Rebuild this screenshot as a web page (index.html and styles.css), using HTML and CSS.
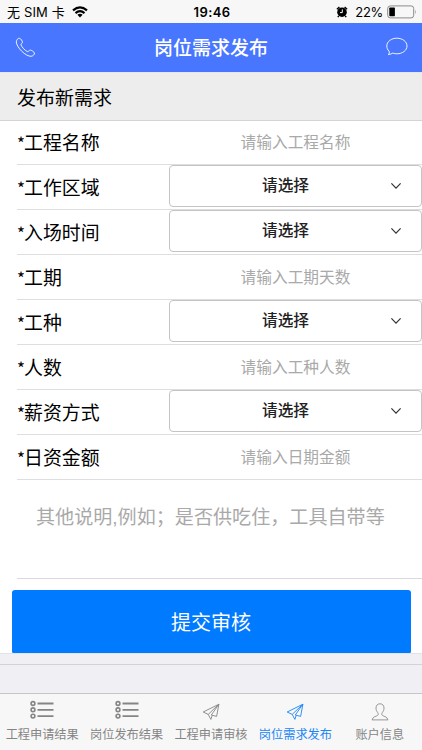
FILE: index.html
```
<!DOCTYPE html>
<html lang="zh-CN">
<head>
<meta charset="utf-8">
<title>岗位需求发布</title>
<link rel="stylesheet" href="styles.css">
</head>
<body>
<div class="status">
  <div class="carrier"><span>无 SIM 卡</span>
    <svg width="16" height="12" viewBox="0 0 16 12" fill="none" stroke="#000" stroke-width="2.1"><path d="M1 4.4Q8-1.8 15 4.4M3.5 7.1Q8 3.1 12.5 7.1"/><path d="M5.4 8.7Q8 6.700 10.600 8.700L8 11.500Z" fill="#000" stroke="none"/></svg>
  </div>
  <div class="time">19:46</div>
  <div class="power">
    <svg width="12" height="12" viewBox="0 0 12 12"><circle cx="6" cy="6.2" r="4.8"/><path d="M.9 3.2 3.4 1M11.1 3.2 8.6 1M2.8 9.8 1.8 11.2M9.2 9.8l1 1.4" stroke="#000" stroke-width="1.4"/><path d="M6.3 3.4v3.2H4" fill="none" stroke="#fff" stroke-width="1"/></svg>
    <span>22%</span>
    <svg width="30" height="14" viewBox="0 0 30 14"><rect x=".7" y=".9" width="26" height="12" rx="2.6" fill="none" stroke="#8a8a8a"/><rect x="2.3" y="2.5" width="5.6" height="8.8" rx=".7"/><path d="M28 4.7q1.5 2.2 0 4.4z" fill="#888"/></svg>
  </div>
</div>
<header class="header">
  <svg width="21" height="21" viewBox="0 0 21 21" fill="none" stroke="#fff" stroke-width=".9"><path d="M4.6 1.3C3 .9 1.4 3.1 1.3 4.9c-.1 2.3 2.3 6.2 5.4 9.3s7 5.3 9.4 5.1c1.8-.2 3.7-2 3.4-3.2-.2-1-3-3-4.2-3-1.1 0-1.7 1.7-2.8 1.5-1.9-.4-6.2-4.9-6.5-6.8C5.8 6.7 7.500 6.200 7.500 5.200 7.500 4 5.700 1.600 4.600 1.300Z"/></svg>
  <h1>岗位需求发布</h1>
  <svg width="22" height="20" viewBox="0 0 22 20" fill="none" stroke="#fff" stroke-width=".9"><path d="M2.300 17.500C3.600 16.700 3.500 15.300 3 14.100 1.500 12.700.8 10.900.8 9c0-4.500 4.500-7.800 10.100-7.800S21 4.600 21 9s-4.500 7.800-10.100 7.800c-1.500 0-2.900-.3-4.100-.7-1.300.8-2.800 1.400-4.500 1.400Z"/></svg>
</header>
<h2 class="section">发布新需求</h2>
<main class="form">
  <div class="row"><label><i>*</i>工程名称</label><div class="input">请输入工程名称</div></div>
  <div class="row"><label><i>*</i>工作区域</label><div class="select"><span>请选择</span><svg class="chev" viewBox="0 0 12 8"><path d="m1.400 1.300 4.600 4.900 4.600-4.900"/></svg></div></div>
  <div class="row"><label><i>*</i>入场时间</label><div class="select"><span>请选择</span><svg class="chev" viewBox="0 0 12 8"><path d="m1.400 1.300 4.600 4.900 4.600-4.900"/></svg></div></div>
  <div class="row"><label><i>*</i>工期</label><div class="input">请输入工期天数</div></div>
  <div class="row"><label><i>*</i>工种</label><div class="select"><span>请选择</span><svg class="chev" viewBox="0 0 12 8"><path d="m1.400 1.300 4.600 4.900 4.600-4.900"/></svg></div></div>
  <div class="row"><label><i>*</i>人数</label><div class="input">请输入工种人数</div></div>
  <div class="row"><label><i>*</i>薪资方式</label><div class="select"><span>请选择</span><svg class="chev" viewBox="0 0 12 8"><path d="m1.400 1.300 4.600 4.900 4.600-4.900"/></svg></div></div>
  <div class="row"><label><i>*</i>日资金额</label><div class="input">请输入日期金额</div></div>
  <div class="notes">其他说明,例如；是否供吃住，工具自带等</div>
  <button class="submit">提交审核</button>
</main>
<div class="gap"></div>
<nav class="tabs">
  <div class="tab"><svg width="24" height="20" viewBox="0 0 24 20" fill="none" stroke="#858585" stroke-width="1.600"><circle cx="3" cy="3.500" r="1.900"/><circle cx="3" cy="9.800" r="1.900"/><circle cx="3" cy="16.100" r="1.900"/><path d="M7.500 3.500H23.500M7.500 9.800H23.500M7.500 16.100H23.500" stroke-width="1.800"/></svg><span>工程申请结果</span></div>
  <div class="tab"><svg width="24" height="20" viewBox="0 0 24 20" fill="none" stroke="#858585" stroke-width="1.600"><circle cx="3" cy="3.500" r="1.900"/><circle cx="3" cy="9.800" r="1.900"/><circle cx="3" cy="16.100" r="1.900"/><path d="M7.500 3.500H23.500M7.500 9.800H23.500M7.500 16.100H23.500" stroke-width="1.800"/></svg><span>岗位发布结果</span></div>
  <div class="tab"><svg class="plane" width="18" height="20" viewBox="0 0 18 20"><path d="M16.900 4.200 1.200 12l5 2.400L16.900 4.200ZM6.200 14.400 8.900 19.400 10.200 15.300M16.900 4.200 9.300 15 14.600 16.400Z"/></svg><span>工程申请审核</span></div>
  <div class="tab active"><svg class="plane" width="18" height="20" viewBox="0 0 18 20"><path d="M16.900 4.200 1.200 12l5 2.400L16.900 4.200ZM6.200 14.400 8.900 19.400 10.200 15.300M16.900 4.200 9.300 15 14.600 16.400Z"/></svg><span>岗位需求发布</span></div>
  <div class="tab"><svg class="person" width="18" height="20" viewBox="0 0 18 20" fill="none" stroke="#8b8b8b" stroke-width=".9"><path d="M9 1.800C6.500 1.800 5 3.500 5 6c0 2.200.8 3.400 1.700 4.600.7 1 .8 2.200-.2 2.900-1.100.8-4.900 1.100-5.400 4.400h15.800c-.5-3.300-4.300-3.600-5.400-4.400-1-.7-.9-1.900-.2-2.900C12.200 9.400 13 8.200 13 6c0-2.500-1.500-4.200-4-4.200Z"/></svg><span>账户信息</span></div>
</nav>
</body>
</html>
```
FILE: styles.css
```
* { box-sizing: border-box; }
body {
  margin: 0;
  width: 422px;
  height: 750px;
  overflow: hidden;
  display: flex;
  flex-direction: column;
  background: #efeff4;
  color: #000;
  font-family: "Liberation Sans", "Noto Sans CJK SC", sans-serif;
}
svg { display: block; flex: none; }
h1, h2 { margin: 0; font-weight: 400; }
.status {
  height: 23px;
  flex: none;
  display: grid;
  grid-template-columns: 1fr auto 1fr;
  align-items: center;
  padding: 0 5px 0 7px;
  background: #f7f7f7;
  font: 13px/22px Inter, "Noto Sans CJK SC", sans-serif;
}
.carrier, .power { display: flex; align-items: center; }
.carrier { gap: 7px; letter-spacing: .15px; }
.power { justify-content: flex-end; gap: 4px; }
.power span { margin-left: 3px; letter-spacing: -.3px; }
.time { font-weight: 600; letter-spacing: .4px; }
.header {
  height: 49px;
  flex: none;
  display: flex;
  align-items: center;
  justify-content: space-between;
  padding: 0 14px 1px 15px;
  background: #4876ff;
  color: #fff;
}
.header h1 { font-size: 19px; font-weight: 500; line-height: 48px; padding-top: 3px; }
.section {
  height: 49px;
  flex: none;
  padding: 1px 0 0 17px;
  border-top: 1px solid #e6e6f0;
  border-bottom: 1px solid #d4d4d6;
  background: #ededed;
  font-size: 19px;
  line-height: 49px;
}
.form {
  height: 532px;
  flex: none;
  padding-left: 17px;
  background: #fff;
}
.row {
  height: 45px;
  display: flex;
  align-items: flex-start;
  border-bottom: 1px solid #dedee0;
}
.row:first-child { height: 44px; }
.row label { width: 152px; flex: none; font-size: 18.900px; line-height: 47px; }
.row label i {
  display: inline-block;
  width: 7px;
  font: 17px/20px "Noto Sans CJK SC", sans-serif;
}
.row:first-child label { line-height: 46px; }
.input { flex: 1; text-align: center; font-size: 15.700px; line-height: 45px; color: #a9a9a9; }
.row:first-child .input { line-height: 43px; }
.select {
  width: 253px;
  height: 42px;
  display: flex;
  align-items: center;
  justify-content: space-between;
  padding: 0 19px 3px 92px;
  border: 1px solid #c4c4c4;
  border-radius: 4px;
  font-size: 15.700px;
  font-weight: 500;
  color: #222;
}
.chev { width: 12px; height: 8px; fill: none; stroke: #333; stroke-width: 1.2; margin-top: 3px; }
.notes {
  height: 99px;
  padding: 23px 0 0 19px;
  border-bottom: 1px solid #d9d9e0;
  font-size: 19.080px;
  line-height: 30px;
  color: #a9a9a9;
  white-space: nowrap;
}
.submit {
  display: block;
  width: 399px;
  height: 64px;
  margin: 11px 0 0 -5.500px;
  padding: 0;
  border: 0;
  border-radius: 3px;
  background: #007aff;
  color: #fff;
  font: 20px/64px "Noto Sans CJK SC", sans-serif;
}
.gap { height: 12px; flex: none; border-top: 1px solid #e3e3e7; border-bottom: 1px solid #d2d2d7; }
.tabs {
  height: 57px;
  margin-top: auto;
  flex: none;
  display: grid;
  grid-template-columns: repeat(5, 1fr);
  border-top: 1px solid #c5c5ca;
  background: #f7f7f7;
}
.tab {
  display: flex;
  flex-direction: column;
  align-items: center;
  padding-top: 6px;
  color: #858585;
  font-size: 12.200px;
  line-height: 18px;
  white-space: nowrap;
}
.tab span { margin-top: 6px; }
.plane { fill: none; stroke: currentColor; stroke-width: .9; stroke-linejoin: round; }
.person { padding-top: 2px; height: 22px; margin-bottom: -2px; }
.active { color: #1c86f5; }
```
